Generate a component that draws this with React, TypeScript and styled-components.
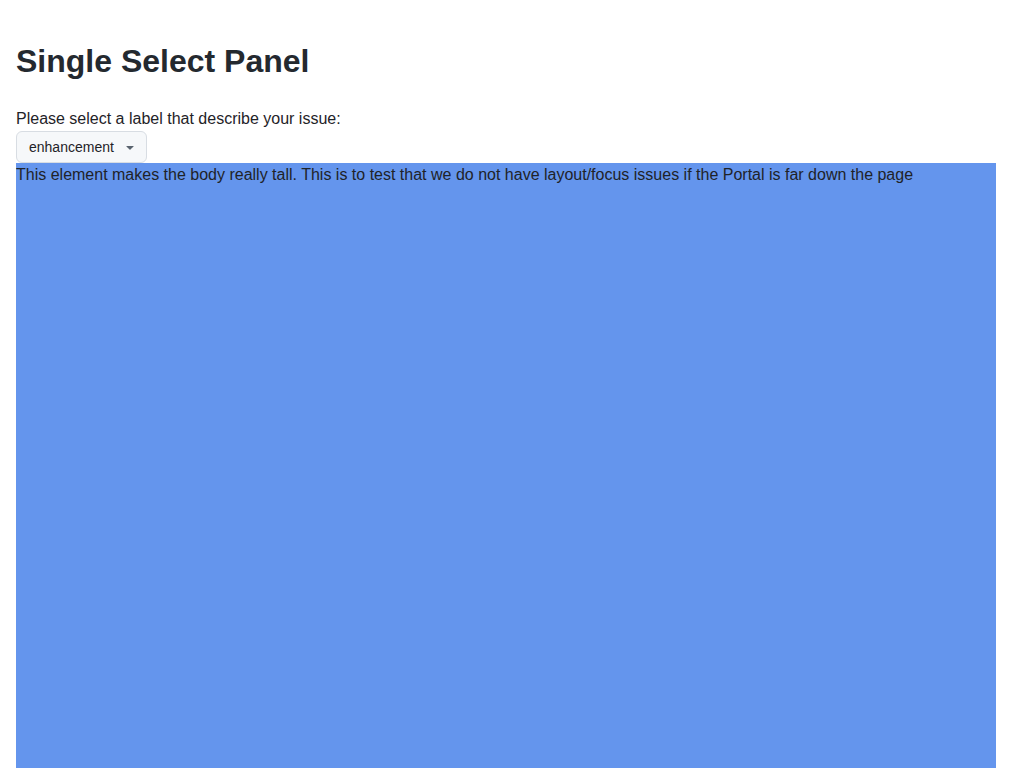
import React from 'react';
import styled, { createGlobalStyle } from 'styled-components';

const GlobalStyle = createGlobalStyle`
    body {
        margin: 0;
        background: #fff;
        color: #1f2328;
        font-family: 'Liberation Sans', Arial, sans-serif;
        font-size: 16px;
        line-height: 1.5;
    }
`;

const Page = styled.main`
    padding: 16px;
`;

const Title = styled.h1`
    font-size: 32px;
    font-weight: 700;
    line-height: 1.5;
    margin: 21px 0 22px;
    color: #24292f;
`;

const Field = styled.div`
    display: flex;
    flex-direction: column;
    align-items: flex-start;
`;

const Label = styled.label`
    font-size: 16px;
    line-height: 24px;
`;

const SelectButton = styled.button`
    display: inline-flex;
    align-items: center;
    gap: 8px;
    height: 32px;
    padding: 0 8px 0 12px;
    border: 1px solid #d8dde3;
    border-radius: 6px;
    background: #f6f8fa;
    color: #1f2328;
    font-family: inherit;
    font-size: 14px;
    cursor: pointer;
`;

const Caret = styled.svg`
    width: 16px;
    height: 16px;
    fill: #59636e;
`;

const TallBlock = styled.div`
    background: cornflowerblue;
    height: 2000px;
`;

const App: React.FC = () => {
    return (
        <>
            <GlobalStyle />
            <Page>
                <Title>Single Select Panel</Title>
                <Field>
                    <Label>Please select a label that describe your issue:</Label>
                    <SelectButton type="button">
                        enhancement
                        <Caret viewBox="0 0 16 16">
                            <path d="m4.427 7.427 3.396 3.396a.25.25 0 0 0 .354 0l3.396-3.396A.25.25 0 0 0 11.396 7H4.604a.25.25 0 0 0-.177.427Z" />
                        </Caret>
                    </SelectButton>
                </Field>
                <TallBlock>
                    This element makes the body really tall. This is to test that we do not have layout/focus issues if the Portal is far down the page
                </TallBlock>
            </Page>
        </>
    );
};

export default App;
